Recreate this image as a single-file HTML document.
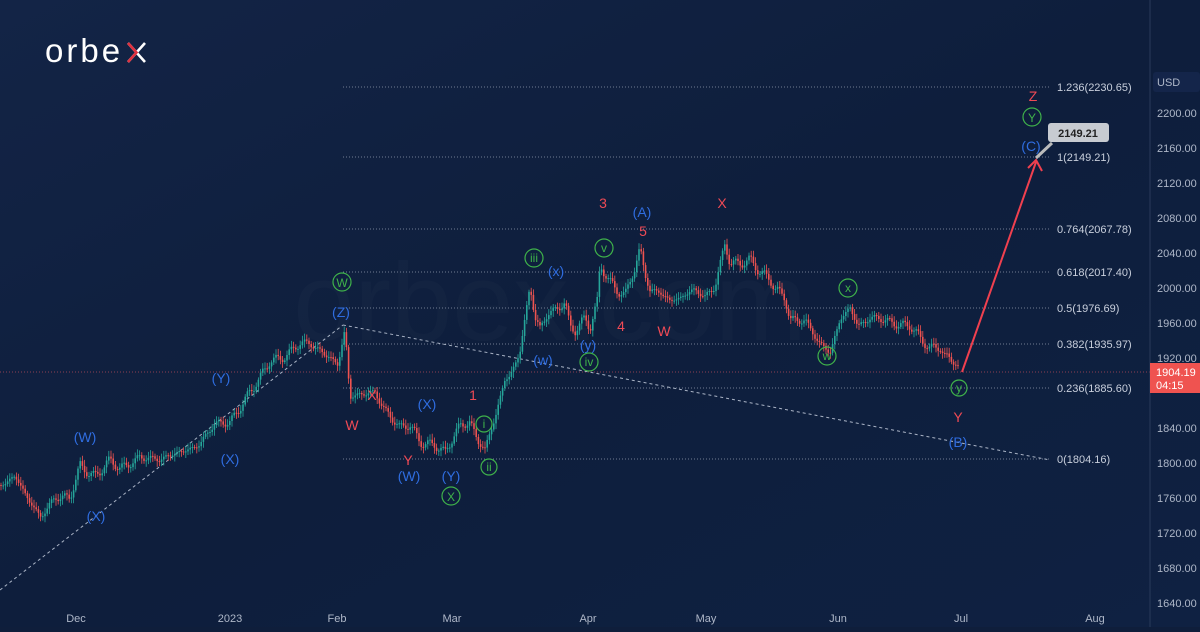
<!DOCTYPE html><html><head><style>
body{margin:0;width:1200px;height:627px;overflow:hidden;background:#0f1e3b;font-family:"Liberation Sans",sans-serif}
</style></head><body>
<svg width="1200" height="627" viewBox="0 0 1200 627" xmlns="http://www.w3.org/2000/svg" font-family="Liberation Sans, sans-serif">
<defs><linearGradient id="bg" x1="0" y1="0" x2="1" y2="1"><stop offset="0" stop-color="#132446"/><stop offset="0.5" stop-color="#0e1e3c"/><stop offset="1" stop-color="#0f2142"/></linearGradient></defs>
<rect width="1200" height="627" fill="url(#bg)"/>
<text x="550" y="340" font-size="110" fill="#ffffff" opacity="0.015" text-anchor="middle">orbex.com</text>
<text x="45" y="62" font-size="33" fill="#fff" letter-spacing="3">orbe</text>
<path d="M128,43 L145,62 M145,43 L128,62" stroke="#fff" stroke-width="2.6"/>
<path d="M128,43 L136.5,52.5 L128,62" stroke="#e0313f" stroke-width="2.6" fill="none"/>
<g stroke="#8a94a8" stroke-width="1" stroke-dasharray="1,2" opacity="0.8">
<line x1="343" y1="87" x2="1050" y2="87"/><line x1="343" y1="157" x2="1050" y2="157"/>
<line x1="343" y1="229" x2="1050" y2="229"/><line x1="343" y1="272" x2="1050" y2="272"/>
<line x1="343" y1="308" x2="1050" y2="308"/><line x1="343" y1="344" x2="1050" y2="344"/>
<line x1="343" y1="388" x2="1050" y2="388"/><line x1="343" y1="459" x2="1050" y2="459"/>
</g>
<line x1="0" y1="372" x2="1150" y2="372" stroke="#e05560" stroke-width="1" stroke-dasharray="1,2" opacity="0.6"/>
<g fill="#c8cfdc" font-size="11">
<text x="1057" y="91">1.236(2230.65)</text><text x="1057" y="161">1(2149.21)</text>
<text x="1057" y="233">0.764(2067.78)</text><text x="1057" y="276">0.618(2017.40)</text>
<text x="1057" y="312">0.5(1976.69)</text><text x="1057" y="348">0.382(1935.97)</text>
<text x="1057" y="392">0.236(1885.60)</text><text x="1057" y="463">0(1804.16)</text>
</g>
<g stroke="#aab4c6" stroke-width="1" stroke-dasharray="3,3" fill="none">
<path d="M0,590 L343,325"/><path d="M343,325 L1050,460"/>
</g>
<g id="candles"></g>
<path d="M962,372 L1036,162" stroke="#f0404f" stroke-width="2" fill="none"/>
<path d="M1028,168 L1036,160 L1042,171" stroke="#f0404f" stroke-width="2" fill="none"/>
<path d="M1036,158 L1052,143" stroke="#bbb" stroke-width="3"/>
<rect x="1048" y="123" width="61" height="19" rx="3" fill="#c7cbd1"/>
<text x="1078" y="137" font-size="11" font-weight="bold" fill="#222" text-anchor="middle">2149.21</text>
<g font-size="14" text-anchor="middle">
<g fill="#2f6de0"><text x="85" y="442">(W)</text><text x="96" y="521">(X)</text><text x="221" y="383">(Y)</text><text x="230" y="464">(X)</text><text x="341" y="317">(Z)</text><text x="427" y="409">(X)</text><text x="409" y="481">(W)</text><text x="451" y="481">(Y)</text><text x="642" y="217">(A)</text><text x="556" y="276">(x)</text><text x="543" y="365">(w)</text><text x="588" y="350">(y)</text><text x="1031" y="151">(C)</text><text x="958" y="447">(B)</text></g>
<g fill="#ef4a55"><text x="372" y="400">X</text><text x="352" y="430">W</text><text x="408" y="465">Y</text><text x="473" y="400">1</text><text x="603" y="208">3</text><text x="643" y="236">5</text><text x="621" y="331">4</text><text x="664" y="336">W</text><text x="722" y="208">X</text><text x="958" y="422">Y</text><text x="1033" y="101">Z</text></g>
</g>
<g fill="none" stroke="#3fb24a" stroke-width="1.2">
<circle cx="342" cy="282" r="9"/><circle cx="534" cy="258" r="9"/><circle cx="604" cy="248" r="9"/><circle cx="589" cy="362" r="9"/><circle cx="484" cy="424" r="8"/><circle cx="489" cy="467" r="8"/><circle cx="451" cy="496" r="9"/><circle cx="848" cy="288" r="9"/><circle cx="827" cy="356" r="9"/><circle cx="959" cy="388" r="8"/><circle cx="1032" cy="117" r="9"/>
</g>
<g fill="#3fb24a" font-size="12" text-anchor="middle">
<text x="342" y="287">W</text><text x="534" y="262">iii</text><text x="604" y="252">v</text><text x="589" y="366">iv</text><text x="484" y="428">i</text><text x="489" y="471">ii</text><text x="451" y="501">X</text><text x="848" y="292">x</text><text x="827" y="360">w</text><text x="959" y="392">y</text><text x="1032" y="122">Y</text>
</g>
<line x1="1150" y1="0" x2="1150" y2="627" stroke="#2a3a5a"/>
<rect x="1153" y="72" width="47" height="20" rx="3" fill="#14254a"/>
<g fill="#aeb7c8" font-size="11">
<text x="1157" y="86">USD</text>
<text x="1157" y="117">2200.00</text><text x="1157" y="152">2160.00</text><text x="1157" y="187">2120.00</text><text x="1157" y="222">2080.00</text><text x="1157" y="257">2040.00</text><text x="1157" y="292">2000.00</text><text x="1157" y="327">1960.00</text><text x="1157" y="362">1920.00</text><text x="1157" y="432">1840.00</text><text x="1157" y="467">1800.00</text><text x="1157" y="502">1760.00</text><text x="1157" y="537">1720.00</text><text x="1157" y="572">1680.00</text><text x="1157" y="607">1640.00</text>
</g>
<rect x="1150" y="363" width="50" height="30" fill="#ef5350"/>
<text x="1156" y="376" font-size="11" fill="#fff">1904.19</text><text x="1156" y="389" font-size="11" fill="#fff">04:15</text>
<g fill="#aeb7c8" font-size="11" text-anchor="middle">
<text x="76" y="622">Dec</text><text x="230" y="622">2023</text><text x="337" y="622">Feb</text><text x="452" y="622">Mar</text><text x="588" y="622">Apr</text><text x="706" y="622">May</text><text x="838" y="622">Jun</text><text x="961" y="622">Jul</text><text x="1095" y="622">Aug</text>
</g>
</svg>
<script>
(function(){
var P=[[0,485],[15,478],[25,495],[40,515],[55,498],[70,500],[80,465],[95,475],[110,462],[120,470],[140,455],[160,462],[180,450],[200,445],[215,425],[230,420],[245,400],[260,380],[270,360],[285,355],[300,345],[310,345],[320,350],[330,355],[338,365],[345,330],[350,400],[360,395],[375,390],[385,410],[400,430],[410,425],[420,440],[435,445],[445,455],[460,425],[470,420],[478,440],[485,450],[495,420],[505,380],[510,375],[520,350],[530,285],[535,320],[540,330],[548,315],[555,310],[565,300],[570,325],[575,330],[585,320],[590,330],[598,300],[600,265],[610,280],[618,290],[625,295],[635,270],[640,250],[645,275],[650,290],[660,290],[670,300],[680,300],[695,290],[705,295],[715,285],[725,245],[730,265],[740,265],[750,258],[760,270],[770,280],[775,290],[785,300],[790,320],[805,318],[820,345],[830,355],[840,320],[850,305],[858,325],[870,320],[880,320],[895,322],[910,325],[920,340],[930,350],[940,345],[945,355],[955,360],[960,370]];
function yAt(x){for(var i=1;i<P.length;i++){if(P[i][0]>=x){var a=P[i-1],b=P[i];var t=(x-a[0])/((b[0]-a[0])||1);return a[1]+t*(b[1]-a[1]);}}return 370;}
var h='',prev=yAt(0);
for(var x=1;x<960;x+=2.2){var c=yAt(x)+Math.sin(x*7)*4*Math.cos(x*1.7)+Math.sin(x*0.45)*3;var o=prev;prev=c;var col=c<o?'#26a69a':'#ef5350';
var tp=Math.min(o,c)-2-Math.abs(Math.sin(x*3.1))*4,bt=Math.max(o,c)+2+Math.abs(Math.cos(x*2.3))*4;
h+='<line x1="'+x.toFixed(1)+'" y1="'+tp.toFixed(1)+'" x2="'+x.toFixed(1)+'" y2="'+bt.toFixed(1)+'" stroke="'+col+'" stroke-width="0.8"/>';
h+='<rect x="'+(x-0.8).toFixed(1)+'" y="'+Math.min(o,c).toFixed(1)+'" width="1.6" height="'+Math.max(1,Math.abs(c-o)).toFixed(1)+'" fill="'+col+'"/>';}
document.getElementById('candles').innerHTML=h;
})();
</script>
</body></html>
